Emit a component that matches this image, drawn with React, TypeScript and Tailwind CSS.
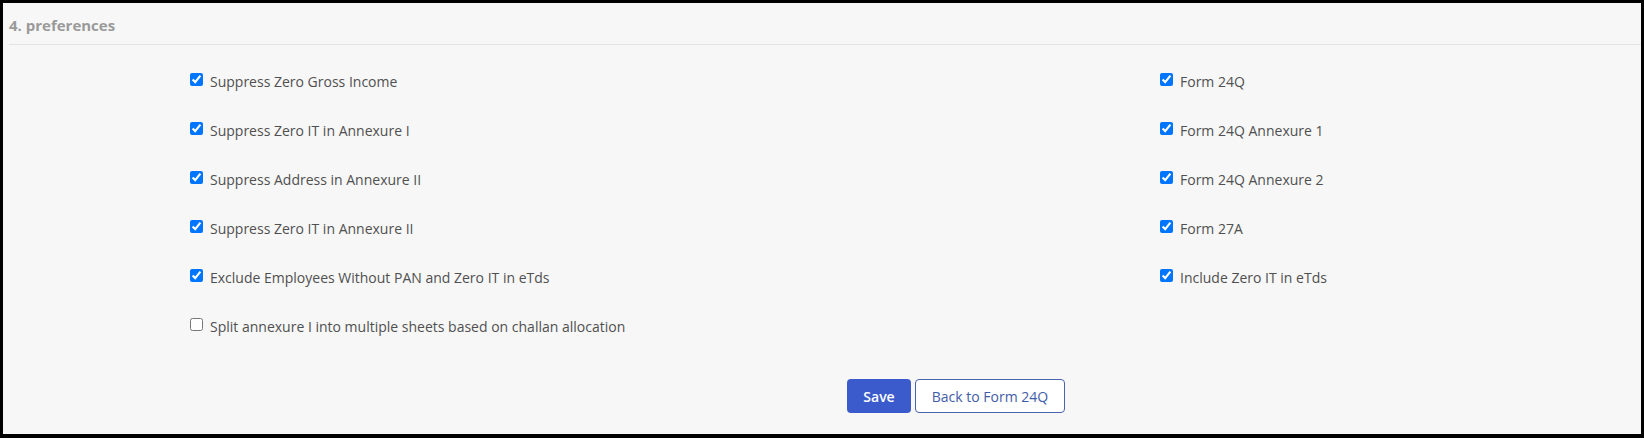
import React from "react";

const left = [
  { label: "Suppress Zero Gross Income", checked: true },
  { label: "Suppress Zero IT in Annexure I", checked: true },
  { label: "Suppress Address in Annexure II", checked: true },
  { label: "Suppress Zero IT in Annexure II", checked: true },
  { label: "Exclude Employees Without PAN and Zero IT in eTds", checked: true },
  { label: "Split annexure I into multiple sheets based on challan allocation", checked: false },
];

const right = [
  { label: "Form 24Q", checked: true },
  { label: "Form 24Q Annexure 1", checked: true },
  { label: "Form 24Q Annexure 2", checked: true },
  { label: "Form 27A", checked: true },
  { label: "Include Zero IT in eTds", checked: true },
];

function Row({ label, checked }: { label: string; checked: boolean }) {
  return (
    <label className="flex h-[49px] items-center gap-[7px] text-[14px] text-[#505050]">
      <input
        type="checkbox"
        defaultChecked={checked}
        className="mb-1 h-[13px] w-[13px] accent-[#0075ff]"
      />
      <span>{label}</span>
    </label>
  );
}

export default function App() {
  return (
    <div
      className="box-border flex h-[438px] w-[1644px] flex-col border-[3px] border-b-4 border-black bg-[#f7f7f7]"
      style={{ fontFamily: '"Open Sans", "Noto Sans", sans-serif' }}
    >
      <div className="ml-[6px] flex h-[42px] items-center border-b border-[#e3e3e3] pt-[3px]">
        <span className="text-[15px] font-bold text-[#9a9a9a]">4. preferences</span>
      </div>
      <div className="flex pt-[12px] pl-[187px]">
        <div className="w-[970px]">
          {left.map((r) => (
            <Row key={r.label} {...r} />
          ))}
        </div>
        <div className="flex-1">
          {right.map((r) => (
            <Row key={r.label} {...r} />
          ))}
        </div>
      </div>
      <div className="ml-[844px] mt-[28px] flex gap-[4px]">
        <button className="h-[34px] w-[64px] rounded-[4px] bg-[#3b5bcc] text-[14px] font-semibold text-white">
          Save
        </button>
        <button className="h-[34px] w-[150px] rounded-[4px] border border-[#4a63b0] bg-white text-[14px] text-[#3f5ca8]">
          Back to Form 24Q
        </button>
      </div>
    </div>
  );
}
